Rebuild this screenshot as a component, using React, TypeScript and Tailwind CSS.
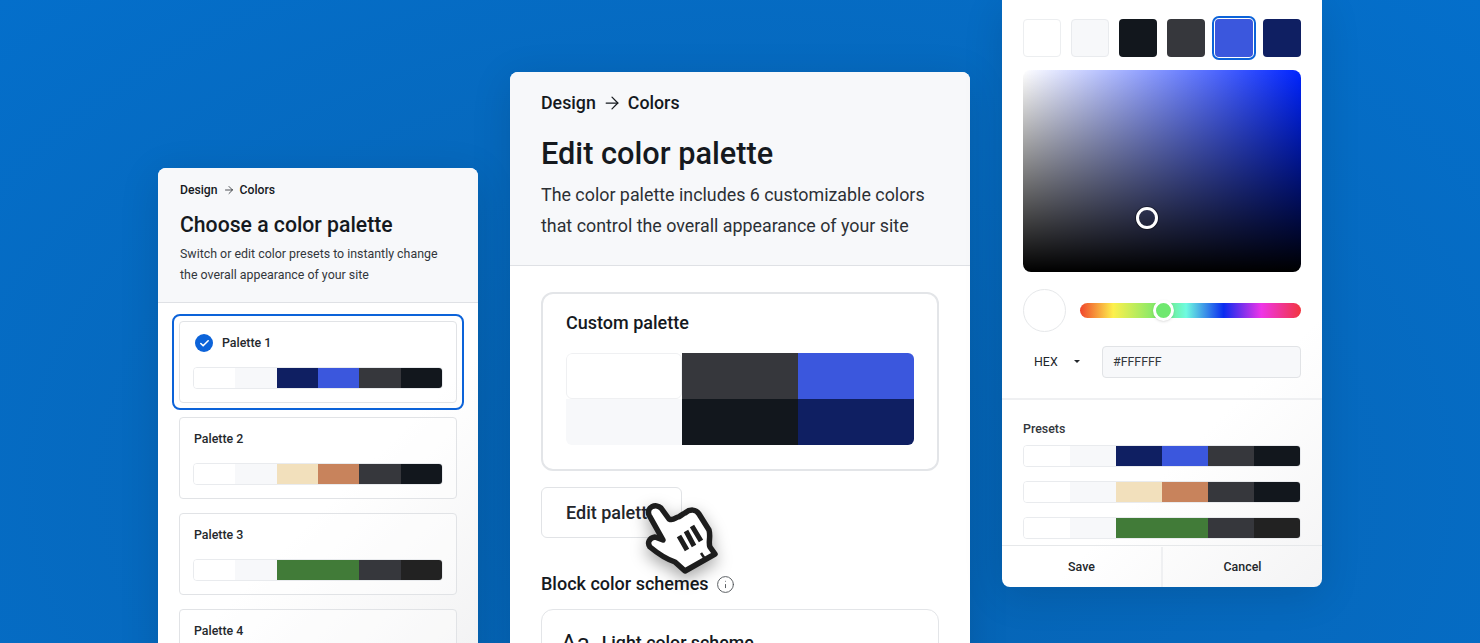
import { ArrowRight, Check, Info } from 'lucide-react';

const WHITE = '#ffffff';
const LIGHT = '#f7f8fa';
const NAVY = '#0f1f62';
const BLUE = '#3b57dd';
const GRAY = '#36373c';
const INK = '#12171d';

type Segment = { color: string; span?: number };

const palette1: Segment[] = [{ color: WHITE }, { color: LIGHT }, { color: NAVY }, { color: BLUE }, { color: GRAY }, { color: INK }];
const palette2: Segment[] = [{ color: WHITE }, { color: LIGHT }, { color: '#f2e0bc' }, { color: '#c8835c' }, { color: GRAY }, { color: INK }];
const palette3: Segment[] = [{ color: WHITE }, { color: LIGHT }, { color: '#417b38', span: 2 }, { color: GRAY }, { color: '#222222' }];

function ColorBar({ segments }: { segments: Segment[] }) {
  return (
    <div className="flex h-[22px] overflow-hidden rounded-[4px] border border-[#e9ebee]">
      {segments.map((s, i) => (
        <div key={i} className="-my-px h-[22px]" style={{ backgroundColor: s.color, flex: s.span ?? 1 }} />
      ))}
    </div>
  );
}

function Breadcrumb({ large }: { large?: boolean }) {
  return (
    <div className={large ? 'flex items-center gap-[6px] text-[17.8px] leading-[22px] font-medium' : 'flex items-center gap-[5px] text-[12.2px] leading-[16px] font-medium'}>
      <span>Design</span>
      <ArrowRight className={large ? 'h-[20px] w-[20px]' : 'h-[12px] w-[12px]'} strokeWidth={1.5} />
      <span>Colors</span>
    </div>
  );
}

function PaletteCard({ name, segments, selected }: { name: string; segments: Segment[]; selected?: boolean }) {
  return (
    <div className="h-[82px] rounded-[4px] border border-[#e1e3e6] bg-white/40 px-[13px] pt-[11px]">
      <div className="ml-px flex h-[20px] items-center gap-[9px] text-[12.4px] font-medium text-[#24282d]">
        {selected && (
          <span className="ml-px flex h-[18px] w-[18px] items-center justify-center rounded-full bg-[#0c63d9] text-white">
            <Check className="h-[11px] w-[11px]" strokeWidth={3.5} />
          </span>
        )}
        <span>{name}</span>
      </div>
      <div className="mt-[14px]">
        <ColorBar segments={segments} />
      </div>
    </div>
  );
}

function HandCursor() {
  return (
    <svg
      viewBox="0 0 100 90"
      className="absolute top-[3px] left-[89px] h-[90px] w-[100px] drop-shadow-[0_6px_8px_rgba(0,0,0,0.35)]"
      fill="#ffffff"
      stroke="#1d1d1d"
      strokeWidth="5.5"
      strokeLinejoin="round"
      strokeLinecap="butt"
    >
      <path d="M19 25C16 17 26 13 31 18L39 29C43 31 45 28 48 27C50 27 52 24 55 23C60 19 66 19 69 24L79 40C81 47 78 52 80 57L85 64L55 81L45 72C36 69 26 62 20 57C17 53 19 48 25 47L33 50Z" />
      <path d="M49 46L57 60M56 41L64 56M62 36L71 51" fill="none" strokeWidth="5" />
      <path d="M71 63L75 69" fill="none" strokeWidth="2.5" />
    </svg>
  );
}

export default function App() {
  return (
    <div className="relative h-[643px] w-full overflow-hidden bg-[radial-gradient(ellipse_at_50%_75%,#0561b0_0%,#0669be_55%,#046fcb_100%)] font-[Roboto,sans-serif] text-[#15191e]">
      <div className="flex items-start justify-center gap-8">
        {/* Left panel */}
        <div className="mt-[168px] w-[320px] shrink-0 rounded-t-lg bg-[linear-gradient(135deg,#ffffff_60%,#f1f1f2_100%)] shadow-[0_8px_40px_rgba(0,0,0,0.12)]">
          <div className="rounded-t-lg border-b border-[#dfe1e5] bg-[#f7f8fa] px-[22px] pt-[14px] pb-[17px]">
            <Breadcrumb />
            <h2 className="mt-[12px] text-[21.2px] leading-[30px] font-medium">Choose a color palette</h2>
            <p className="mt-[3px] text-[12.4px] leading-[21px] text-[#33373c]">
              Switch or edit color presets to instantly change
              <br />
              the overall appearance of your site
            </p>
          </div>
          <div className="flex flex-col gap-[14px] px-[21px] pt-[18px]">
            <div className="relative">
              <div className="absolute -inset-[7px] rounded-lg border-2 border-[#0c63d9]" />
              <PaletteCard name="Palette 1" segments={palette1} selected />
            </div>
            <PaletteCard name="Palette 2" segments={palette2} />
            <PaletteCard name="Palette 3" segments={palette3} />
            <PaletteCard name="Palette 4" segments={palette1} />
          </div>
        </div>

        {/* Middle panel */}
        <div className="mt-[72px] w-[460px] shrink-0 rounded-t-lg bg-white shadow-[0_8px_40px_rgba(0,0,0,0.12)]">
          <div className="rounded-t-lg border-b border-[#dfe1e5] bg-[#f7f8fa] px-[31px] pt-[20px] pb-[24px]">
            <Breadcrumb large />
            <h1 className="mt-[19px] text-[30.7px] leading-[42px] font-medium">Edit color palette</h1>
            <p className="mt-[4px] text-[17.85px] leading-[31px] text-[#2c3035]">
              The color palette includes 6 customizable colors
              <br />
              that control the overall appearance of your site
            </p>
          </div>
          <div className="px-[31px] pt-[26px]">
            <div className="h-[179px] rounded-xl border-2 border-[#e3e5e8] px-[23px] pt-[17px]">
              <div className="text-[18px] leading-[24px] font-medium">Custom palette</div>
              <div className="mt-[18px] grid h-[92px] grid-cols-3 grid-rows-2 overflow-hidden rounded-[6px]">
                <div className="rounded-[6px] border border-[#eff0f2] bg-white" />
                <div className="bg-[#36373c]" />
                <div className="bg-[#3b57dd]" />
                <div className="bg-[#f7f8fa]" />
                <div className="bg-[#12171d]" />
                <div className="bg-[#0f1f62]" />
              </div>
            </div>
            <div className="relative mt-[16px] inline-block">
              <button className="h-[51px] rounded-[6px] border border-[#e1e3e6] bg-white px-[24px] text-[18px] font-medium text-[#22262b]">
                Edit palette
              </button>
              <HandCursor />
            </div>
            <div className="mt-[33px] flex items-center gap-[7px] text-[18px] leading-[26px] font-medium">
              <span>Block color schemes</span>
              <Info className="h-[19px] w-[19px] text-[#54585d]" strokeWidth={1.2} />
            </div>
            <div className="mt-[12px] h-[120px] rounded-xl border border-[#e3e5e8] px-[19px] pt-[18px]">
              <div className="flex items-center gap-[12px]">
                <span className="text-[24px] leading-[30px]">Aa</span>
                <span className="text-[17.8px] font-medium">Light color scheme</span>
              </div>
            </div>
          </div>
        </div>

        {/* Right panel */}
        <div className="w-[320px] shrink-0 rounded-b-lg bg-[linear-gradient(135deg,#ffffff_70%,#f4f4f5_100%)] shadow-[0_8px_40px_rgba(0,0,0,0.12)]">
          <div className="px-[21px] pt-[19px]">
            <div className="flex gap-[10px]">
              <div className="h-[38px] w-[38px] rounded-[4px] border border-[#eceef0] bg-white" />
              <div className="h-[38px] w-[38px] rounded-[4px] border border-[#e9ebee] bg-[#f7f8fa]" />
              <div className="h-[38px] w-[38px] rounded-[4px] bg-[#12171d]" />
              <div className="h-[38px] w-[38px] rounded-[4px] bg-[#36373c]" />
              <div className="h-[38px] w-[38px] rounded-[4px] bg-[#3b57dd] ring-1 ring-white outline-2 outline-offset-1 outline-[#0c63d9]" />
              <div className="h-[38px] w-[38px] rounded-[4px] bg-[#0f1f62]" />
            </div>
            <div className="relative mt-[13px] h-[202px] rounded-lg bg-[linear-gradient(to_bottom,transparent,#000),linear-gradient(to_right,#fff,#0024ff)]">
              <div className="absolute top-[137px] left-[113px] h-[22px] w-[22px] rounded-full border-[3px] border-white ring-1 ring-black/40" />
            </div>
            <div className="mt-[17px] flex items-center gap-[14px]">
              <div className="h-[43px] w-[43px] rounded-full border border-[#e6e8ea] bg-white" />
              <div className="relative h-[15px] flex-1 rounded-full bg-[linear-gradient(to_right,#f0452b,#fdf04c_15%,#6fe86f_37%,#6ffbe0_48%,#0a2cf0_65%,#ee35e8_82%,#f2353f_100%)]">
                <div className="absolute -top-[3px] left-[73px] h-[21px] w-[21px] rounded-full border-[3px] border-white bg-[#6fe86f] shadow-sm" />
              </div>
            </div>
            <div className="mt-[14px] flex items-center">
              <div className="flex w-[79px] items-center pl-[11px] text-[12.4px] text-[#22262b]">
                <span>HEX</span>
                <span className="ml-[16px] h-0 w-0 border-x-[3px] border-t-[3px] border-x-transparent border-t-[#22262b]" />
              </div>
              <div className="flex h-[32px] flex-1 items-center rounded-[4px] border border-[#e1e3e6] bg-[#f7f8fa] pl-[10px] text-[12.4px] text-[#33373c]">
                #FFFFFF
              </div>
            </div>
          </div>
          <div className="mt-[20px] border-t-2 border-[#eff0f2] px-[21px] pt-[20px]">
            <div className="text-[12.4px] leading-[17px] font-medium text-[#33373c]">Presets</div>
            <div className="mt-[8px] flex flex-col gap-[14px]">
              <ColorBar segments={palette1} />
              <ColorBar segments={palette2} />
              <ColorBar segments={palette3} />
            </div>
          </div>
          <div className="mt-[6px] flex h-[42px] border-t border-[#e6e8ea] pt-px text-[12.4px] font-medium text-[#22262b]">
            <button className="flex-1">Save</button>
            <button className="flex-1 border-l-2 border-[#eff0f2]">Cancel</button>
          </div>
        </div>
      </div>
    </div>
  );
}
